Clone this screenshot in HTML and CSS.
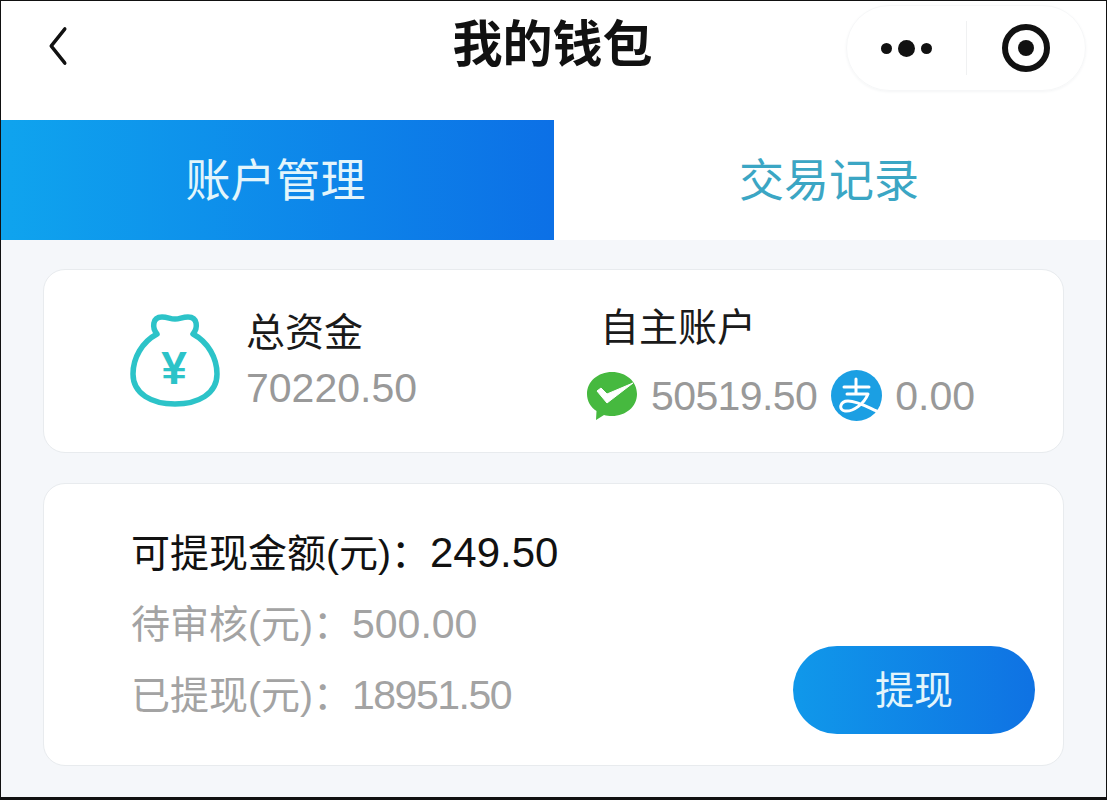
FILE: index.html
```html
<!DOCTYPE html>
<html>
  <head>
    <meta charset="UTF-8" />
    <title>我的钱包</title>
    <link rel="stylesheet" href="styles.css">
  </head>
  <body>
    <div class="frame">
      <div class="header">
        <svg class="back" width="24" height="40" viewBox="0 0 24 40">
          <path d="M20 3 L4 20 L20 37" fill="none" stroke="#111" stroke-width="4" stroke-linecap="round" stroke-linejoin="round" />
        </svg>
        <div class="title">我的钱包</div>
        <div class="capsule">
          <div class="capsule-part">
            <span class="dot"></span><span class="dot dot-big"></span><span class="dot"></span>
          </div>
          <div class="capsule-line"></div>
          <div class="capsule-part">
            <div class="target"><div class="target-in"></div></div>
          </div>
        </div>
      </div>

      <div class="tabs">
        <div class="tab tab-on">账户管理</div>
        <div class="tab">交易记录</div>
      </div>

      <div class="content">
        <div class="card card-top">
          <div class="total">
            <svg class="bag" width="90" height="94" viewBox="0 0 90 94">
              <path d="M27 20 C22 14 22 3 32 3 C38 3 40 5 45 5 C50 5 52 3 58 3 C68 3 68 14 63 20 C78 28 87 44 87 60 C87 80 68 90 45 90 C22 90 3 80 3 60 C3 44 12 28 27 20 Z" fill="none" stroke="#2cc3c8" stroke-width="5.500" stroke-linejoin="round" />
              <text class="bag-yen" x="44" y="70" text-anchor="middle">¥</text>
            </svg>
            <div class="total-text">
              <div class="label">总资金</div>
              <div class="num num-total">70220.50</div>
            </div>
          </div>
          <div class="own">
            <div class="label">自主账户</div>
            <div class="own-row">
              <svg class="pay-icon" width="52" height="50" viewBox="0 0 52 50">
                <path d="M26 1 C40 1 51 10.500 51 23 C51 35.500 40 45 26 45 C23 45 20.500 44.600 18 44 L10 49 L10.500 40 C4.500 36 1 30 1 23 C1 10.500 12 1 26 1 Z" fill="#46b93f" />
                <path d="M11 20 L21 32 L47 12 L21 23 L15 17 Z" fill="#fff" stroke="#fff" stroke-width="1" stroke-linejoin="round" />
              </svg>
              <span class="num num-wx">50519.50</span>
              <svg class="ali-icon" width="51" height="51" viewBox="0 0 51 51">
                <circle cx="25.500" cy="25.500" r="25.500" fill="#1b9fe3" />
                <path d="M13 17 H38 M25 9 V24 M16 24 H37 C33 34 22 42 14 41 C7 40 9 31 17 31 C27 31 38 38 50 43" fill="none" stroke="#fff" stroke-width="3" stroke-linecap="round" stroke-linejoin="round" />
              </svg>
              <span class="num">0.00</span>
            </div>
          </div>
        </div>

        <div class="card card-bottom">
          <div class="rows">
            <div class="row row-main">可提现金额(元)：<span class="row-num row-num-main">249.50</span></div>
            <div class="row">待审核(元)：<span class="row-num">500.00</span></div>
            <div class="row">已提现(元)：<span class="row-num row-num-tight">18951.50</span></div>
          </div>
          <div class="btn">提现</div>
        </div>
      </div>
    </div>
  </body>
</html>
```

FILE: styles.css
```css
* {
  box-sizing: border-box;
}
html, body {
  margin: 0;
  padding: 0;
  background: #000;
}
body {
  font-family: "Liberation Sans", "Noto Sans CJK SC", sans-serif;
}
.frame {
  width: 1107px;
  height: 800px;
  border-style: solid;
  border-color: #111;
  border-width: 1px 1px 3px 1px;
  background: #f5f7fa;
  overflow: hidden;
}

.header {
  height: 119px;
  background: #fff;
  display: flex;
  align-items: flex-start;
  justify-content: space-between;
  padding: 4px 20px 0 45px;
  position: relative;
}
.back {
  margin-top: 21px;
  transform: scaleX(0.85);
}
.title {
  position: absolute;
  left: 0;
  right: 0;
  top: 14px;
  padding-right: 2px;
  text-align: center;
  font-size: 50px;
  line-height: 60px;
  font-weight: 700;
  color: #111;
}
.capsule {
  width: 240px;
  height: 86px;
  border: 1px solid #f6f7f8;
  border-radius: 43px;
  display: flex;
  align-items: center;
  box-shadow: 0 1px 3px #f4f5f6;
}
.capsule-part {
  flex: 1;
  display: flex;
  align-items: center;
  justify-content: center;
  gap: 6px;
}
.capsule-line {
  width: 1px;
  height: 54px;
  background: #f0f1f2;
}
.dot {
  width: 11px;
  height: 11px;
  border-radius: 50%;
  background: #111;
}
.dot-big {
  width: 17px;
  height: 17px;
}
.target {
  width: 48px;
  height: 48px;
  border: 6px solid #111;
  border-radius: 50%;
  display: flex;
  align-items: center;
  justify-content: center;
}
.target-in {
  width: 16px;
  height: 16px;
  border-radius: 50%;
  background: #111;
}

.tabs {
  display: flex;
  height: 120px;
  background: #fff;
}
.tab {
  flex: 1;
  display: flex;
  align-items: center;
  justify-content: center;
  padding-bottom: 6px;
  font-size: 45px;
  color: #3ba6c4;
}
.tab-on {
  flex: none;
  width: 553px;
  padding-right: 4px;
  color: #e3f5fb;
  background: linear-gradient(90deg, #0fa4ee, #0c70e6);
}
.tab + .tab {
  padding-right: 2px;
}

.content {
  padding: 29px 42px 0;
}
.card {
  background: #fff;
  border: 1px solid #e8ebee;
  border-radius: 22px;
}
.card-top {
  height: 184px;
  display: flex;
  padding: 0 0 0 86px;
}
.total {
  width: 470px;
  display: flex;
  align-items: center;
  gap: 26px;
}
.bag-yen {
  font-size: 46px;
  font-weight: 700;
  fill: #2cc3c8;
}
.label {
  font-size: 39px;
  line-height: 46px;
  color: #1a1a1a;
}
.num {
  font-size: 41px;
  line-height: 50px;
  color: #999;
}
.num-total {
  margin-top: 7px;
}
.own {
  padding-top: 35px;
}
.own-row {
  display: flex;
  align-items: center;
  margin: 19px 0 0 -14px;
}
.pay-icon {
  margin-right: 13px;
}
.num-wx {
  letter-spacing: -0.6px;
  margin-right: 14px;
}
.ali-icon {
  margin-right: 13px;
}

.card-bottom {
  margin-top: 30px;
  height: 283px;
  display: flex;
  justify-content: space-between;
  align-items: flex-end;
  padding: 0 28px 31px 87px;
}
.rows {
  align-self: flex-start;
  padding-top: 44px;
}
.row {
  font-size: 39px;
  line-height: 50px;
  margin-bottom: 20px;
  color: #a3a3a3;
  white-space: nowrap;
}
.row-main {
  color: #111;
}
.row-num {
  font-size: 41px;
}
.row-num-main {
  font-size: 42px;
}
.row-num-tight {
  letter-spacing: -1.5px;
}
.btn {
  width: 242px;
  height: 88px;
  padding-bottom: 6px;
  border-radius: 44px;
  background: linear-gradient(90deg, #1098ea, #0f72e3);
  color: #e3f5fb;
  font-size: 39px;
  display: flex;
  align-items: center;
  justify-content: center;
}
```
